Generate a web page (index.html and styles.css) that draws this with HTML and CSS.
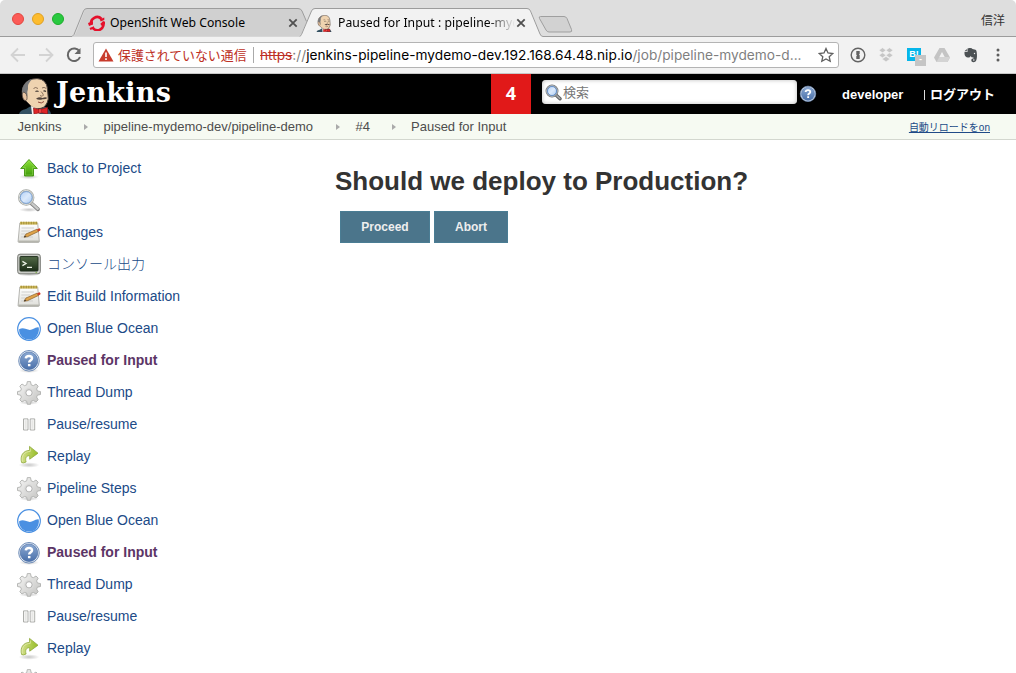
FILE: index.html
```html
<!DOCTYPE html>
<html lang="ja">
<head>
<meta charset="utf-8">
<title>Paused for Input : pipeline-mydemo-dev</title>
<link rel="stylesheet" href="styles.css">
</head>
<body>
<svg class="defs" width="0" height="0">
  <defs>
    <linearGradient id="green" x1="0" y1="0" x2="0" y2="1"><stop offset="0" stop-color="#8be234"/><stop offset="1" stop-color="#3f9a0c"/></linearGradient>
    <linearGradient id="lens" x1="0" y1="0" x2="1" y2="1"><stop offset="0" stop-color="#a9cbf5"/><stop offset=".5" stop-color="#dbe9fb"/><stop offset="1" stop-color="#a5c8f2"/></linearGradient>
    <linearGradient id="screen" x1="0" y1="0" x2="0" y2="1"><stop offset="0" stop-color="#526a47"/><stop offset="1" stop-color="#1b2d18"/></linearGradient>
    <linearGradient id="paper" x1="0" y1="0" x2="0" y2="1"><stop offset="0" stop-color="#fff"/><stop offset="1" stop-color="#deded9"/></linearGradient>
    <linearGradient id="blue" x1="0" y1="0" x2="0" y2="1"><stop offset="0" stop-color="#8aa8d2"/><stop offset="1" stop-color="#4a70aa"/></linearGradient>
    <linearGradient id="steel" x1="0" y1="0" x2="1" y2="1"><stop offset="0" stop-color="#f6f6f5"/><stop offset="1" stop-color="#c2c2c0"/></linearGradient>
    <linearGradient id="olive" x1="0" y1="0" x2="1" y2="0"><stop offset="0" stop-color="#d3df8b"/><stop offset="1" stop-color="#96bd25"/></linearGradient>
    <radialGradient id="shade"><stop offset="0" stop-color="#000" stop-opacity=".22"/><stop offset="1" stop-color="#000" stop-opacity="0"/></radialGradient>
  </defs>
  <symbol id="i-up" viewBox="0 0 24 24">
    <ellipse cx="12" cy="19.800" rx="10" ry="2.500" fill="url(#shade)"/>
    <path d="M12 2.500L20.300 11.500H16.500V19H7.500V11.500H3.700Z" fill="url(#green)" stroke="#43930f" stroke-width=".9"/>
    <path d="M12 4L18 10.500H15.500V18H8.500V10.500H6Z" fill="none" stroke="#a3e568" stroke-width=".6" opacity=".7"/>
  </symbol>
  <symbol id="i-search" viewBox="0 0 24 24">
    <ellipse cx="12" cy="20.800" rx="10" ry="2.200" fill="url(#shade)"/>
    <path d="M14.500 14.500L21 20.200" stroke="#858585" stroke-width="3.800" stroke-linecap="round"/>
    <path d="M14.500 14.200L20.800 19.800" stroke="#c9cac9" stroke-width="2.300" stroke-linecap="round"/>
    <circle cx="9.200" cy="8.500" r="7.200" fill="url(#lens)" stroke="#a2a5a0" stroke-width="2"/>
    <circle cx="9.200" cy="8.500" r="7.100" fill="none" stroke="#e1e2df" stroke-width=".9"/>
    <circle cx="9.200" cy="8.500" r="5.900" fill="none" stroke="#618fcc" stroke-width=".7"/>
  </symbol>
  <symbol id="i-find" viewBox="0 0 17 17">
    <path d="M11 11L15 14.800" stroke="#5f6163" stroke-width="3.400" stroke-linecap="round"/>
    <path d="M11 11L14.800 14.500" stroke="#a9abad" stroke-width="1.500" stroke-linecap="round"/>
    <circle cx="7" cy="7" r="5.600" fill="url(#lens)" stroke="#6f7377" stroke-width="1.700"/>
    <circle cx="7" cy="7" r="5.400" fill="none" stroke="#cfd4d9" stroke-width=".7"/>
    <circle cx="7" cy="7" r="4.500" fill="none" stroke="#4f83c8" stroke-width=".8"/>
  </symbol>
  <symbol id="i-note" viewBox="0 0 24 24">
    <path d="M2.800 2H20.700L22.300 20.300Q22.400 21.400 21.300 21.400H2Q1 21.400 1.100 20.300Z" fill="url(#paper)" stroke="#a3a39e" stroke-width=".8"/>
    <path d="M1.400 20.300H22.200" stroke="#b5b5ad" stroke-width="1.500"/>
    <rect x="3" y=".8" width="17.300" height="2.800" fill="#d0ba5c"/>
    <path d="M4.300 .7V3.300M6.800 .7V3.300M9.300 .7V3.300M11.800 .7V3.300M14.300 .7V3.300M16.800 .7V3.300M19.300 .7V3.300" stroke="#8d7b2a" stroke-width=".7"/>
    <path d="M4.500 7H17M4.300 10H13M4.200 13H10M4 16H16" stroke="#cfcfcd" stroke-width="1"/>
    <path d="M7 16.200L9 13L20 8.200L21.400 10.500L10.500 15.700Z" fill="#dfa34a" stroke="#88602b" stroke-width=".7"/>
    <path d="M20 8.200L22.600 7.300Q24 8.300 23.300 9.600L21.400 10.500Z" fill="#cf3d25"/>
    <path d="M7 16.200L8 14.600L9.200 15.900Z" fill="#333"/>
  </symbol>
  <symbol id="i-term" viewBox="0 0 24 24">
    <ellipse cx="12" cy="21.500" rx="11.500" ry="1.800" fill="url(#shade)"/>
    <rect x=".7" y="1.200" width="22.600" height="19.600" rx="2.300" fill="#c9cbc6" stroke="#777973"/>
    <rect x="3" y="3.600" width="18" height="14.400" rx=".8" fill="url(#screen)" stroke="#22301e"/>
    <path d="M5.400 8.400L9 10.500L5.400 12.600M10 14.400H15" fill="none" stroke="#eef3e8" stroke-width="1.300"/>
    <path d="M18.500 19.600H20" stroke="#6daf28" stroke-width=".8"/>
  </symbol>
  <symbol id="i-ocean" viewBox="0 0 24 24">
    <circle cx="12" cy="12" r="11.300" fill="#fff" stroke="#4a90e2" stroke-width="1.200"/>
    <path d="M2.100 12.300C5 10.500 8 11.300 11 12.600C15 14.400 17 9.800 21.600 10.300A9.900 9.900 0 1 1 2.100 12.300Z" fill="#4a90e2"/>
  </symbol>
  <symbol id="i-help" viewBox="0 0 24 24">
    <ellipse cx="12" cy="21.500" rx="10" ry="2.500" fill="url(#shade)"/>
    <circle cx="12" cy="11.800" r="10.300" fill="#edf2f8" stroke="#6f8db8" stroke-width="1"/>
    <circle cx="12" cy="11.800" r="8.800" fill="url(#blue)" stroke="#4267a0" stroke-width=".6"/>
    <path d="M8.800 9.400Q9 6.900 12 6.900Q15 6.900 15 9.200Q15 10.500 13.600 11.400Q12.200 12.300 12.200 13.600M12.200 15V17.300" fill="none" stroke="#fff" stroke-width="2.500"/>
  </symbol>
  <symbol id="i-gear" viewBox="0 0 24 24">
    <ellipse cx="12" cy="21.600" rx="10" ry="2.200" fill="url(#shade)"/>
    <path d="M10.300 .6H13.500L14.200 3.800L16.300 4.700L19 3L21.200 5.200L19.600 7.900L20.400 9.900L23.500 10.600V13.500L20.400 14.200L19.600 16.100L21.200 18.800L19 21L16.300 19.400L14.200 20.200L13.500 23.300H10.300L9.700 20.200L7.600 19.400L5 21L2.800 18.800L4.400 16.100L3.600 14.200L.5 13.500V10.600L3.600 9.900L4.400 7.900L2.800 5.200L5 3L7.600 4.700L9.700 3.800Z" fill="url(#steel)" stroke="#a8a9a7" stroke-width=".8"/>
    <circle cx="12" cy="11.800" r="4.800" fill="#dadad9"/>
    <circle cx="12" cy="11.800" r="3.100" fill="#fff" stroke="#a4a5a3" stroke-width=".8"/>
  </symbol>
  <symbol id="i-pause" viewBox="0 0 24 24">
    <path d="M6.500 5.900H11V17H6.500ZM13.200 5.900H17.700V17H13.200Z" fill="#e7e7e5" stroke="#a4a5a1" stroke-width=".9"/>
    <path d="M7.500 6.800H10V16.100H7.500ZM14.200 6.800H16.700V16.100H14.200Z" fill="none" stroke="#fff" stroke-width=".5"/>
  </symbol>
  <symbol id="i-replay" viewBox="0 0 24 24">
    <ellipse cx="12" cy="20" rx="10.500" ry="2.800" fill="url(#shade)"/>
    <path d="M4.600 17.500C2.800 11 6 5.600 12.500 5.400V1.400L21 8.200L12.700 14.200V10.700C9 10.500 8 13.500 9.100 17Q6 18.500 4.600 17.500Z" fill="url(#olive)" stroke="#8fa93c" stroke-width=".8"/>
    <path d="M5.400 16.600C4.300 11 7.200 6.500 13.300 6.400V3.500" fill="none" stroke="#e6edb4" stroke-width=".7"/>
  </symbol>
  <symbol id="butler" viewBox="0 0 32 36">
    <path d="M0 36Q1 32 7 31L12 28H25Q31 31 32 36Z" fill="#335061"/>
    <path d="M4.500 21Q1.500 13 5 7Q9 .6 18 .6Q27.500 1 28.500 11L29.300 21Q27.500 29 22 30.300Q15 32 11 27L7 23Z" fill="#efd3b0" stroke="#493f3b" stroke-width="1"/>
    <path d="M4.500 19Q1.500 12 5 7Q8 2 13.500 1Q8 5.500 9 11Q8 13 8.500 17L8 20Z" fill="#77787a"/>
    <path d="M4.500 14Q2 16 4.500 21.500Q6.500 23.500 8 21.500Q8.500 15 4.500 14Z" fill="#e8c4a2" stroke="#493f3b" stroke-width=".7"/>
    <path d="M14.500 10.500Q16.500 8.500 19 10.500M23 10Q25 8.500 27.300 10.500M22 13.500Q25.500 17 23.500 18Q22 18.500 21 17.500" fill="none" stroke="#6d5546" stroke-width=".8"/>
    <path d="M16.500 13.500Q18 12.500 19.500 13.500M24.500 13.300Q25.500 12.500 27 13.500" stroke="#332d2a" stroke-width="1.200" fill="none"/>
    <path d="M17 20.800Q20.500 18.300 23.500 20Q26.500 18.500 28.500 20Q26 21.800 23.500 21.200Q20 22.500 17 20.800Z" fill="#51443d"/>
    <path d="M19 24Q22.500 26.200 25 23.500" fill="none" stroke="#914b3e" stroke-width="1"/>
    <path d="M12 28L22 33L20 36H13Z" fill="#f4f4f1"/>
    <path d="M14.500 30L20.500 31.800L28.500 29.500V36L21.500 34.500L15 36Z" fill="#df2527" stroke="#931416" stroke-width=".7"/>
    <rect x="19.700" y="31" width="3" height="4" fill="#ed4444" stroke="#931416" stroke-width=".5"/>
  </symbol>
</svg>

<div class="window">
  <div class="tabstrip">
    <svg class="tabshapes" width="1016" height="37" viewBox="0 0 1016 37">
      <path d="M0 36.500H72C75 36 75.500 34 76.500 32L84.500 11Q85.500 8.500 88 8.500H298Q301 8.500 302 11L306.500 22L300 36.500Z" fill="#d0d0d0"/>
      <path d="M0 36.500H72L74 34.500L83.500 11Q84.500 8.500 87 8.500H298Q301 8.500 302 11L306.500 21.500" fill="none" stroke="#9c9c9c"/>
      <path d="M300 37L311.500 11Q312.500 8.500 315 8.500H527Q530 8.500 531 11L540 34Q541 36.500 544 37Z" fill="#f2f2f2"/>
      <path d="M300 36.500L301.500 34.500L311.500 11Q312.500 8.500 315 8.500H527Q529.500 8.500 530.500 11L540 34Q541 36.500 543 36.500H1016" fill="none" stroke="#9c9c9c"/>
      <path d="M540.500 16.500H564Q566 16.500 567 18.500L571.500 29.500Q572.500 32 570 32H549Q547 32 546 30L539.500 18.500Q538.500 16.500 540.500 16.500Z" fill="#d2d2d2" stroke="#9f9f9f"/>
    </svg>
    <div class="lights"><i class="red"></i><i class="yellow"></i><i class="lime"></i></div>
    <div class="tab tab-one">
      <svg width="18" height="16" viewBox="0 0 18 16"><g fill="none" stroke="#e5102b" stroke-width="2.700"><path d="M3.300 9.500A6 6 0 0 1 13.500 4"/><path d="M14.800 6.500A6 6 0 0 1 4.500 12.600"/></g><path d="M0 8L5 6.200V9.400L1 11ZM12 4.200L16.300 2.500V5L12.500 6.500ZM12.500 8.200L17 6.500V9L13 10.700ZM1.500 13L6 11.300V13.500L2.500 15Z" fill="#e5102b"/></svg>
      <span class="tab-title">OpenShift Web Console</span>
      <svg class="close" width="10" height="10" viewBox="0 0 10 10"><path d="M1.300 1.300L8.700 8.700M8.700 1.300L1.300 8.700"/></svg>
    </div>
    <div class="tab tab-two">
      <svg width="16" height="17"><use href="#butler"/></svg>
      <span class="tab-title fade">Paused for Input : pipeline-myd</span>
      <svg class="close" width="10" height="10" viewBox="0 0 10 10"><path d="M1.300 1.300L8.700 8.700M8.700 1.300L1.300 8.700"/></svg>
    </div>
    <span class="profile">信洋</span>
  </div>
  <div class="toolbar">
    <svg class="nav" width="72" height="24" viewBox="0 0 72 24" fill="none" stroke="#d3d3d3" stroke-width="1.800"><path d="M16 12H3M9 5.500L2.500 12L9 18.500M30 12H43M37 5.500L43.500 12L37 18.500"/><path d="M70.500 8.500A6.300 6.300 0 1 0 71 14" stroke="#666" stroke-width="2"/><path d="M71.500 5V11H65.500Z" fill="#666" stroke="none"/></svg>
    <div class="omnibox">
      <svg width="16" height="14" viewBox="0 0 16 14"><path d="M8 .5L15.500 13.500H.5Z" fill="#c83b2c"/><path d="M8 4.500V9M8 10.300V12" stroke="#fff" stroke-width="1.600"/></svg>
      <span class="insecure">保護されていない通信</span>
      <span class="url"><s>https</s><span class="dim">://</span><span class="host">jenkins-pipeline-mydemo-dev.192.168.64.48.nip.io</span><span class="dim path">/job/pipeline-mydemo-d...</span></span>
      <svg class="star" width="16" height="16" viewBox="0 0 16 16"><path d="M8 1.500L10 6L14.800 6.500L11.200 9.700L12.200 14.300L8 11.900L3.800 14.300L4.800 9.700L1.200 6.500L6 6Z" fill="none" stroke="#606060" stroke-width="1.300"/></svg>
    </div>
    <div class="extensions">
      <svg width="16" height="16" viewBox="0 0 16 16"><circle cx="8" cy="8" r="6.800" fill="none" stroke="#636363" stroke-width="1.400"/><path d="M6.300 4H9.700V6.800L9 7.500L9.700 8.200V12H6.300V9.200L7 8.500L6.300 7.800Z" fill="#636363"/></svg>
      <svg width="16" height="16" viewBox="0 0 16 16"><path d="M4.500 .8L8 3.300L4.500 5.800L1 3.300ZM11.500 .8L15 3.300L11.500 5.800L8 3.300ZM4.500 5.800L8 8.300L4.500 10.800L1 8.300ZM11.500 5.800L15 8.300L11.500 10.800L8 8.300ZM8 9.500L12 12L8 14.800L4 12Z" fill="#c6c6c6" stroke="#f2f2f2" stroke-width=".5"/></svg>
      <div class="hatena"><b>B!</b><i>-</i></div>
      <svg width="16" height="16" viewBox="0 0 16 16"><path d="M5.500 1H10.500L16 10.500L13.500 15H2.500L0 10.500Z" fill="#c4c4c4"/><path d="M8 5L10.700 10H5.300Z" fill="#f2f2f2"/><path d="M5.300 10H16L13.500 15H2.500Z" fill="#d4d4d4"/></svg>
      <svg class="elephant" width="16" height="16" viewBox="0 0 16 16"><path d="M1.500 5H4.500V1.500L6.500 1Q9 .8 9.500 2L12.500 2.800Q13.500 3 13.700 5Q14.500 11 13 14Q12 15.500 9.500 15Q8 14.500 8.300 12.800Q8.600 11.500 10.500 11.600V10.500Q8.200 10.600 7.700 9Q6.800 11 5 10.500Q2 10.300 1.500 7ZM1.500 4.300L3.800 2V4.300Z" fill="#4c5154"/><circle cx="11.500" cy="6.500" r=".7" fill="#eee"/><path d="M10 13H11.500" stroke="#fff"/></svg>
      <svg class="kebab" width="4" height="16" viewBox="0 0 4 16" fill="#5d5d5d"><circle cx="2" cy="3" r="1.500"/><circle cx="2" cy="8" r="1.500"/><circle cx="2" cy="13" r="1.500"/></svg>
    </div>
  </div>

  <header class="header">
    <svg class="logo" width="32" height="36"><use href="#butler"/></svg>
    <span class="brand">Jenkins</span>
    <span class="count">4</span>
    <div class="search"><svg width="17" height="17"><use href="#i-find"/></svg><span>検索</span></div>
    <svg class="help" width="18" height="18"><use href="#i-help"/></svg>
    <span class="user">developer</span>
    <span class="divider"></span>
    <span class="logout">ログアウト</span>
  </header>

  <nav class="crumbs">
    <span class="c-home">Jenkins</span><i></i><span class="c-job">pipeline-mydemo-dev/pipeline-demo</span><i></i><span class="c-num">#4</span><i></i><span class="c-page">Paused for Input</span>
    <a class="reload">自動リロードをon</a>
  </nav>

  <div class="body">
    <ul class="tasks">
      <li><svg><use href="#i-up"/></svg><a>Back to Project</a></li>
      <li><svg><use href="#i-search"/></svg><a>Status</a></li>
      <li><svg><use href="#i-note"/></svg><a>Changes</a></li>
      <li><svg><use href="#i-term"/></svg><a class="ja">コンソール出力</a></li>
      <li><svg><use href="#i-note"/></svg><a>Edit Build Information</a></li>
      <li><svg><use href="#i-ocean"/></svg><a>Open Blue Ocean</a></li>
      <li><svg><use href="#i-help"/></svg><a class="current">Paused for Input</a></li>
      <li><svg><use href="#i-gear"/></svg><a>Thread Dump</a></li>
      <li><svg><use href="#i-pause"/></svg><a>Pause/resume</a></li>
      <li><svg><use href="#i-replay"/></svg><a>Replay</a></li>
      <li><svg><use href="#i-gear"/></svg><a>Pipeline Steps</a></li>
      <li><svg><use href="#i-ocean"/></svg><a>Open Blue Ocean</a></li>
      <li><svg><use href="#i-help"/></svg><a class="current">Paused for Input</a></li>
      <li><svg><use href="#i-gear"/></svg><a>Thread Dump</a></li>
      <li><svg><use href="#i-pause"/></svg><a>Pause/resume</a></li>
      <li><svg><use href="#i-replay"/></svg><a>Replay</a></li>
      <li><svg><use href="#i-gear"/></svg></li>
    </ul>
    <main class="main">
      <h1>Should we deploy to Production?</h1>
      <div class="actions"><button class="proceed">Proceed</button><button class="abort">Abort</button></div>
    </main>
  </div>
</div>
</body>
</html>
```
FILE: styles.css
```css
* { box-sizing: border-box; }
body { margin: 0; background: #fff; font-family: "Liberation Sans", "Noto Sans CJK JP", sans-serif; }
svg { display: block; flex: none; }
.defs { position: absolute; }
.window { width: 1016px; height: 673px; overflow: hidden; }

.tabstrip { position: relative; display: flex; align-items: center; height: 37px; background: #dedede; border-radius: 5px 5px 0 0; padding-top: 1px; }
.tabshapes { position: absolute; left: 0; top: 0; }
.lights { display: flex; gap: 8px; margin-left: 12px; width: 76px; z-index: 1; }
.lights i { width: 12px; height: 12px; border-radius: 50%; }
.red { background: #fc5b57; border: 1px solid #e2463f; }
.yellow { background: #fdbc2e; border: 1px solid #dfa023; }
.lime { background: #29c940; border: 1px solid #1dad2b; }
.tab { display: flex; align-items: center; z-index: 1; padding-top: 8px; }
.tab-one { width: 227px; }
.tab-two { width: 220px; padding-left: 1px; }
.tab-title { font: 12.2px/16px "Noto Sans", sans-serif; color: #000; white-space: nowrap; }
.tab-one .tab-title { margin-left: 4px; width: 178px; }
.tab-two .tab-title { margin-left: 6px; width: 177px; letter-spacing: .05px; }
.fade { -webkit-mask-image: linear-gradient(90deg, #000 84%, transparent 100%); }
.close path { fill: none; stroke: #505050; stroke-width: 1.800; }
.tab-one .close { margin-left: 0; }
.tab-two .close { margin-left: 1px; }
.profile { margin-left: auto; margin-right: 11px; font: 12px/16px "Noto Sans CJK JP", sans-serif; color: #333; z-index: 1; padding-top: 1px; }

.toolbar { display: flex; align-items: center; height: 37px; background: #f2f2f2; padding-left: 9px; border-bottom: 1px solid #c7c7c7; }
.omnibox { display: flex; align-items: center; width: 746px; height: 26px; margin-left: 12px; padding-left: 4px; background: #fff; border: 1px solid #b4b4b4; border-radius: 3px; }
.insecure { width: 136px; margin-left: 4px; padding-right: 6px; border-right: 1px solid #aaa; font: 12.9px/16px "Noto Sans CJK JP", sans-serif; color: #bd3025; white-space: nowrap; }
.url { width: 555px; margin-left: 6px; font: 13.7px/18px Inter, sans-serif; color: #000; white-space: nowrap; }
.url s { color: #bd3025; }
.host { letter-spacing: .03px; }
.dim { color: #7f7f7f; }
.star { margin-left: 3px; }
.extensions { display: flex; align-items: center; margin-left: 11px; gap: 12px; }
.hatena { position: relative; width: 16px; height: 16px; margin-left: 1px; margin-right: -1px; }
.hatena b { display: block; width: 14px; height: 13px; margin-top: 1px; background: #06b6ea; color: #fff; font: bold 9px/13px "Liberation Sans", sans-serif; text-align: center; }
.hatena i { position: absolute; left: 8px; top: 8px; width: 11px; height: 11px; background: #c5c5c5; color: #fff; font: bold 9px/9px "Liberation Sans", sans-serif; text-align: center; }
.kebab { margin-left: 5px; }
.elephant { margin-left: 1px; }

.header { display: flex; height: 40px; background: #000; color: #fff; }
.logo { margin: 4px 0 0 19px; }
.brand { width: 435px; margin-left: 5px; font: bold 27px/38px "DejaVu Serif", serif; letter-spacing: .25px; }
.count { width: 40px; background: #e11919; font: bold 18px/39px "Noto Sans", sans-serif; text-align: center; }
.search { display: flex; align-items: center; width: 255px; height: 24px; margin: 6px 0 0 11px; padding-left: 3px; background: #fff; border-radius: 4px; box-shadow: inset 0 0 4px #bbb; font: 13px/20px "Noto Sans CJK JP", sans-serif; color: #777; }
.search span { margin-left: 1px; }
.help { margin: 11px 0 0 2px; }
.user { margin-left: 25px; width: 82px; font: bold 13px/40px "Liberation Sans", sans-serif; padding-top: 1px; }
.divider { width: 1px; height: 10px; margin-top: 16px; background: #ddd; }
.logout { margin-left: 5px; font: bold 13px/40px "Noto Sans CJK JP", sans-serif; }

.crumbs { display: flex; height: 26px; padding-left: 17.500px; background: #f6faf2; border-bottom: 1px solid #d3d7cf; font-size: 13px; line-height: 25px; color: #4d4d4d; white-space: nowrap; }
.crumbs i { width: 0; height: 0; margin-top: 9.500px; border: 3.500px solid transparent; border-left: 4px solid #aaa; border-right: 0; }
.c-home { width: 66.500px; }
.c-job { width: 232px; margin-left: 15.500px; }
.c-num { width: 36px; margin-left: 16px; }
.c-page { margin-left: 15.500px; }
.reload { margin-left: auto; margin-right: 26px; font-size: 10px; line-height: 27px; color: #204a87; text-decoration: underline; }

.body { display: flex; height: 533px; overflow: hidden; }
.tasks { width: 335px; margin: 0; padding: 12px 0 0 17px; list-style: none; }
.tasks li { display: flex; align-items: center; height: 32px; }
.tasks svg { width: 24px; height: 24px; margin-top: 1px; }
.tasks a { margin-left: 6px; font-size: 14px; line-height: 20px; color: #204a87; }
.tasks .ja { font-weight: 300; }
.tasks .current { font-weight: bold; color: #5c3566; }
.main { flex: 1; }
h1 { margin: 25px 0 0; font-size: 26px; line-height: 32px; color: #333; }
.actions { display: flex; gap: 4px; margin: 14px 0 0 5px; }
.actions button { height: 32px; padding: 0; border: 1px solid #4a7d94; background: #4b758b; color: #eee; font: bold 12px/30px "Liberation Sans", sans-serif; }
.proceed { width: 90px; }
.abort { width: 74px; }
```
